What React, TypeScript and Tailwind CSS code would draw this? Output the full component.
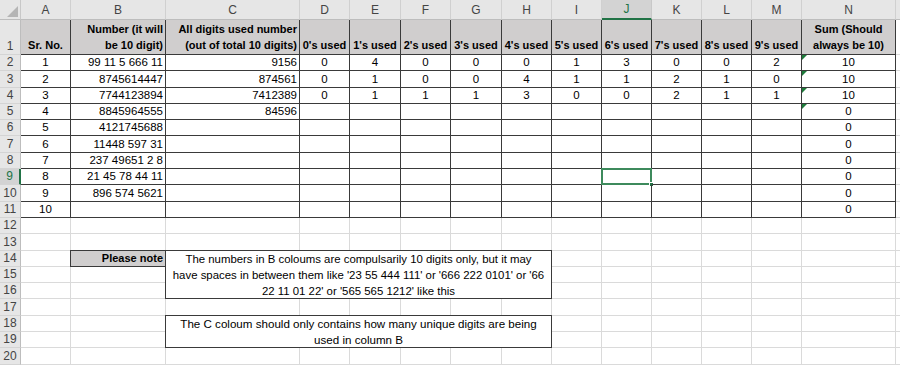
import React from 'react';

const COLS = ['A', 'B', 'C', 'D', 'E', 'F', 'G', 'H', 'I', 'J', 'K', 'L', 'M', 'N', 'O'];

const numbers = [
  '99 11 5 666 11',
  '8745614447',
  '7744123894',
  '8845964555',
  '4121745688',
  '11448 597 31',
  '237 49651 2 8',
  '21 45 78 44 11',
  '896 574 5621',
  '',
];
const uniqueDigits = ['9156', '874561', '7412389', '84596'];
const counts = [
  [0, 4, 0, 0, 0, 1, 3, 0, 0, 2],
  [0, 1, 0, 0, 4, 1, 1, 2, 1, 0],
  [0, 1, 1, 1, 3, 0, 0, 2, 1, 1],
];
const sums = [10, 10, 10, 0, 0, 0, 0, 0, 0, 0];

const headerText: Record<number, string[]> = {
  0: ['Sr. No.'],
  1: ['Number (it will', 'be 10 digit)'],
  2: ['All digits used number', '(out of total 10 digits)'],
  13: ['Sum (Should', 'always be 10)'],
};

// merged ranges: C14:H16 and C18:H19
const isCovered = (r: number, c: number) =>
  c >= 2 && c <= 7 && ((r >= 14 && r <= 16) || (r >= 18 && r <= 19)) && !(c === 2 && (r === 14 || r === 18));

function DataCell({ r, c }: { r: number; c: number }) {
  const inTable = r <= 11 && c <= 13;
  const border = inTable
    ? 'border-r border-b border-[#3a3a3a]'
    : 'border-r border-b border-[#dadada]';

  if (r === 1 && c <= 13) {
    const lines = headerText[c] ?? [`${c - 3}'s used`];
    const align = c === 1 || c === 2 ? 'items-end text-right' : 'items-center text-center';
    return (
      <div className={`flex flex-col justify-end ${align} bg-[#d0cece] text-[11px] font-bold leading-[16px] px-[2px] pb-[1px] whitespace-nowrap ${border}`}>
        {lines.map((l) => (
          <span key={l}>{l}</span>
        ))}
      </div>
    );
  }

  if (r === 14 && c === 1) {
    return (
      <div className="relative z-10 -mt-px -ml-px flex items-end justify-end border border-[#3a3a3a] bg-[#d0cece] px-[2px] text-[11px] font-bold leading-[15px]">
        Please note
      </div>
    );
  }

  if (r === 14 && c === 2) {
    return (
      <div className="relative z-10 col-span-6 row-span-3 -mt-px -ml-px flex items-center justify-center border border-[#3a3a3a] bg-white text-center text-[11.4px] leading-[16px] whitespace-nowrap">
        <div>
          The numbers in B coloums are compulsarily 10 digits only, but it may
          <br />
          have spaces in between them like '23 55 444 111' or '666 222 0101' or '66
          <br />
          22 11 01 22' or '565 565 1212' like this
        </div>
      </div>
    );
  }

  if (r === 18 && c === 2) {
    return (
      <div className="relative z-10 col-span-6 row-span-2 -mt-px -ml-px flex items-center justify-center border border-[#3a3a3a] bg-white text-center text-[11.6px] leading-[16px] whitespace-nowrap">
        <div>
          The C coloum should only contains how many unique digits are being
          <br />
          used in column B
        </div>
      </div>
    );
  }

  let text = '';
  let align = 'justify-center';
  const i = r - 2;
  if (r >= 2 && r <= 11) {
    if (c === 0) text = String(i + 1);
    if (c === 1) {
      text = numbers[i];
      align = 'justify-end';
    }
    if (c === 2) {
      text = uniqueDigits[i] ?? '';
      align = 'justify-end';
    }
    if (c >= 3 && c <= 12 && i < 3) text = String(counts[i][c - 3]);
    if (c === 13) text = String(sums[i]);
  }

  return (
    <div className={`relative flex items-end ${align} px-[2px] leading-[15px] whitespace-nowrap ${border}`}>
      {text}
      {c === 13 && r >= 2 && r <= 5 && (
        <span className="absolute left-0 top-0 h-0 w-0 border-t-[5px] border-r-[5px] border-t-[#1e7b3b] border-r-transparent" />
      )}
      {c === 9 && r === 9 && (
        <>
          <span className="absolute -inset-px border-2 border-[#3d8a5c]" />
          <span className="absolute -bottom-[3px] -right-[3px] h-[5px] w-[5px] border border-white bg-[#217346]" />
        </>
      )}
    </div>
  );
}

export default function App() {
  const rows = Array.from({ length: 20 }, (_, k) => k + 1);

  return (
    <div className="h-[365px] w-[900px] overflow-hidden bg-white font-['Liberation_Sans',Arial,sans-serif] text-[11.5px] text-black">
      <div className="grid grid-cols-[21px_50px_95px_134px_50px_51px_50px_51px_50px_50px_50px_50px_50px_50px_94px_1fr] grid-rows-[20px_35px_repeat(19,16.3px)]">
        {/* corner */}
        <div className="flex items-end justify-end border-r border-b border-r-[#c8c8c8] border-b-[#bdbdbd] bg-[#e6e6e6] p-[2px]">
          <svg width="11" height="11" viewBox="0 0 11 11">
            <polygon points="11,0 11,11 0,11" fill="#b5b5b5" />
          </svg>
        </div>
        {COLS.map((l, c) =>
          c === 9 ? (
            <div
              key={l}
              className="flex items-center justify-center border-r border-r-[#c8c8c8] border-b-2 border-b-[#217346] bg-[#d3d3d3] text-[12px] text-[#217346]"
            >
              {l}
            </div>
          ) : (
            <div
              key={l}
              className="flex items-center justify-center border-r border-b border-r-[#d0d0d0] border-b-[#bdbdbd] bg-[#e6e6e6] text-[12px] text-[#444]"
            >
              {c === 14 ? '' : l}
            </div>
          )
        )}

        {rows.map((r) => (
          <React.Fragment key={r}>
            {r === 9 ? (
              <div className="flex items-end justify-center border-r-2 border-b border-r-[#217346] border-b-[#d4d4d4] bg-[#d3d3d3] pb-[1px] text-[12px] leading-[14px] text-[#217346]">
                {r}
              </div>
            ) : (
              <div className="flex items-end justify-center border-r border-b border-r-[#bdbdbd] border-b-[#d4d4d4] bg-[#e6e6e6] pb-[1px] text-[12px] leading-[14px] text-[#444]">
                {r}
              </div>
            )}
            {COLS.map((_, c) => (isCovered(r, c) ? null : <DataCell key={c} r={r} c={c} />))}
          </React.Fragment>
        ))}
      </div>
    </div>
  );
}
